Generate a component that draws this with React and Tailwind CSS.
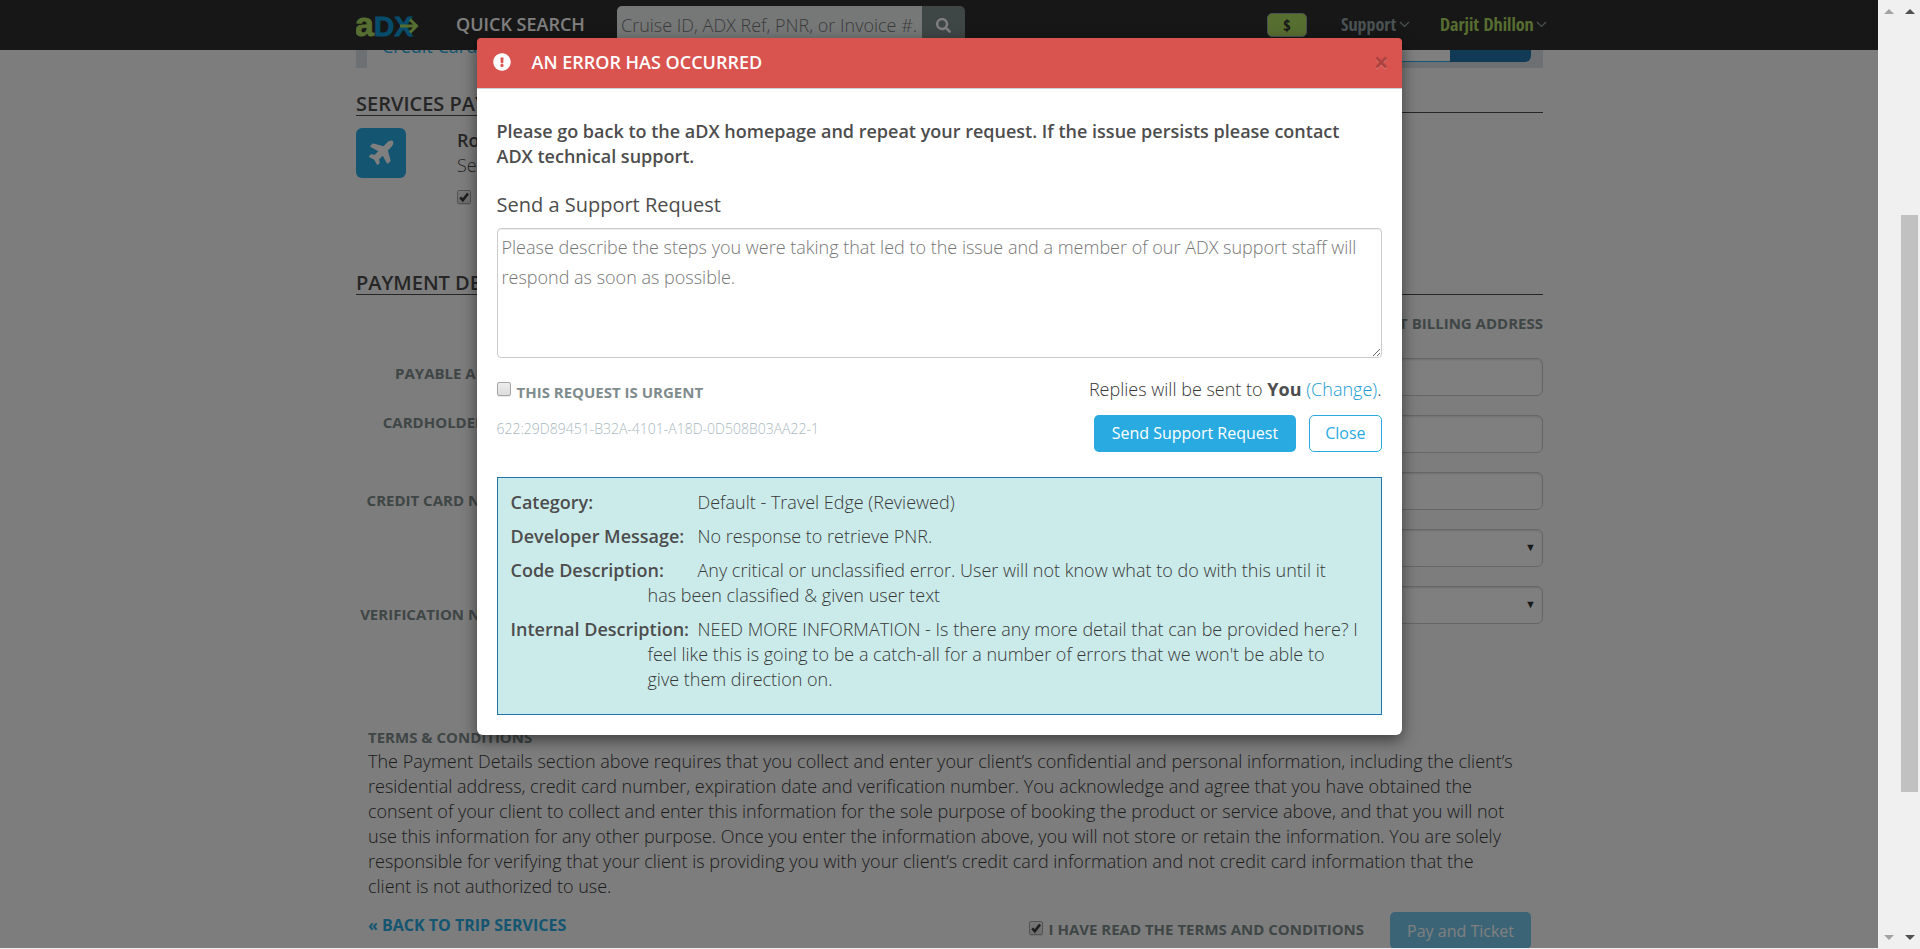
import React from "react";
import { FaExclamationCircle, FaPlane, FaSearch } from "react-icons/fa";

function Logo() {
  return (
    <svg width="64" height="24" viewBox="0 0 64 24" role="img" aria-label="aDX">
      <text x="-1" y="21" fontFamily="'Liberation Sans', sans-serif" fontWeight="700" fontSize="28" strokeWidth="0.8">
        <tspan fontSize="34" fill="#aedc62" stroke="#aedc62">a</tspan>
        <tspan fill="#0f9bd7" stroke="#0f9bd7">DX</tspan>
      </text>
      <path d="M44 11h16M54 4.500l6.500 6.500-6.500 6.500" fill="none" stroke="#aedc62" strokeWidth="3" />
    </svg>
  );
}

function Checkbox({ id, checked, label }) {
  return (
    <span className="relative inline-flex h-3.5 w-3.5 shrink-0">
      <input
        id={id}
        type="checkbox"
        aria-label={label}
        defaultChecked={checked}
        className="peer m-0 h-3.5 w-3.5 appearance-none rounded-[2px] border border-[#a6a6a6] bg-linear-to-b from-[#ededed] to-[#dcdcdc] shadow-[0_1px_1px_rgba(0,0,0,0.1)]"
      />
      <svg viewBox="0 0 13 13" className="pointer-events-none absolute inset-0 hidden peer-checked:block">
        <path d="M3 6.8l2.4 2.7L10.2 3.2" fill="none" stroke="#3c3c3c" strokeWidth="2.4" />
      </svg>
    </span>
  );
}

function Chevron() {
  return (
    <svg width="11" height="7" viewBox="0 0 11 7" aria-hidden="true" className="shrink-0">
      <path d="M1 1l4.5 4.5L10 1" fill="none" stroke="#95a5a6" strokeWidth="1.2" />
    </svg>
  );
}

function TopBar() {
  return (
    <header className="h-[50px] shrink-0 bg-[#2e2e2e] pl-[21px]">
      <div className="mx-auto flex h-full max-w-[1187px] items-start">
        <a href="#home" className="mt-[15px] w-[100px]"><Logo /></a>
        <label htmlFor="quick" className="mt-3 w-[161px] text-[18px] leading-[25px] font-semibold text-white">QUICK SEARCH</label>
        <div className="mt-1.5 flex h-[38px] w-[348px]">
          <input
            id="quick"
            type="text"
            placeholder="Cruise ID, ADX Ref, PNR, or Invoice #."
            className="w-[305px] rounded-l-[5px] bg-[#ecf0f1] pl-1 text-[18px] font-light placeholder:text-[#777]"
          />
          <button aria-label="Search" className="flex flex-1 items-center justify-center rounded-r-[5px] bg-[#7f8c8d] text-white">
            <FaSearch size={15} />
          </button>
        </div>
        <nav className="-mr-1 ml-auto flex items-start font-['Open_Sans_Condensed','Roboto_Condensed',Roboto,sans-serif] text-[18px] font-bold whitespace-nowrap">
          <button className="mt-[13px] h-6 w-10 rounded-[5px] border border-[#95a5a6] bg-[#aedc62] text-[16px] leading-[22px] text-[#2e2e2e]">$</button>
          <a href="#support" className="mt-3 ml-[34px] flex w-[69px] items-center justify-between leading-[25px] text-[#95a5a6]">Support <Chevron /></a>
          <a href="#account" className="mt-3 ml-[30px] flex w-[107px] items-center justify-between leading-[25px] text-[#aedc62]">Darjit Dhillon <Chevron /></a>
        </nav>
      </div>
    </header>
  );
}

const fieldClass =
  "h-[38px] w-full appearance-none rounded-[6px] border border-[#ccc] bg-white px-3 text-[16px] shadow-[inset_0_1px_2px_rgba(0,0,0,0.12)]";

function SelectField({ id }) {
  return (
    <div className="relative">
      <select id={id} aria-label={id} className={fieldClass}><option value=""></option></select>
      <span className="pointer-events-none absolute top-2 right-[7px] text-[11px] leading-5 text-[#333]">▼</span>
    </div>
  );
}

function PaymentPage() {
  return (
    <main className="pl-[21px] text-[#4d4d4d]">
      <div className="mx-auto max-w-[1187px]">
        <div className="flex h-[18px] justify-between overflow-hidden">
          <div className="flex">
            <span className="w-[11px] bg-[#d9e1e4]" />
            <a href="#card" className="-mt-4 pl-[15px] text-[18px] leading-[25px] text-[#29abe2]">Credit Card</a>
          </div>
          <div className="flex h-[18px] w-[300px] items-start bg-[#d9e1e4] pr-3">
            <div className="h-3 flex-1 rounded-bl-[6px] border-b border-[#29abe2] bg-white" />
            <div className="h-3 w-[81px] rounded-br-[6px] bg-[#2174ab]" />
          </div>
        </div>

        <div className="mt-6 flex items-start">
          <h2 className="h-6 flex-1 border-b border-[#4d4d4d] text-[20px] leading-6 font-semibold">SERVICES PAYMENT</h2>
          <div className="h-[21px] w-[400px] border-b border-[#4d4d4d]" />
        </div>

        <div className="mt-3 flex">
          <div className="flex h-[50px] w-[50px] items-center justify-center rounded-[6px] bg-[#29abe2] pb-1 pl-1 text-white">
            <FaPlane size={28} className="-rotate-45" />
          </div>
          <div className="ml-[51px] text-[18px] leading-[25px]">
            <p className="font-semibold">Round</p>
            <p className="font-light">Service</p>
            <div className="mt-3 flex"><Checkbox id="service" checked label="Pay for this service" /></div>
          </div>
        </div>

        <h2 className="mt-[67px] h-6 border-b border-[#4d4d4d] text-[20px] leading-6 font-semibold">PAYMENT DETAILS</h2>
        <p className="mt-[18px] text-right text-[15px] leading-5 font-bold text-[#7f8c8d]">CREDIT BILLING ADDRESS</p>

        <form className="mt-[25px] flex justify-between">
          <div className="flex w-[178px] flex-col pt-[5px] text-right text-[15px] leading-5 font-bold whitespace-nowrap text-[#7f8c8d]">
            <label htmlFor="amount">PAYABLE AMOUNT</label>
            <label htmlFor="holder" className="mt-[29px]">CARDHOLDER NAME</label>
            <label htmlFor="number" className="mt-[58px]">CREDIT CARD NUMBER</label>
            <label htmlFor="cvv" className="mt-[94px]">VERIFICATION NUMBER</label>
          </div>
          <div className="flex w-[400px] flex-col gap-[19px]">
            <input id="amount" className={fieldClass} />
            <input id="holder" className={fieldClass} />
            <input id="number" className={fieldClass} />
            <SelectField id="expiry" />
            <SelectField id="cvv" />
          </div>
        </form>

        <section className="mt-[103px] px-3">
          <h3 className="h-[22px] text-[15px] leading-5 font-bold text-[#7f8c8d]">TERMS &amp; CONDITIONS</h3>
          <p className="text-[18px] leading-[25px] font-light text-[#383838]">
            The Payment Details section above requires that you collect and enter your client’s confidential and personal information, including the client’s residential address, credit card number, expiration date and verification number. You acknowledge and agree that you have obtained the consent of your client to collect and enter this information for the sole purpose of booking the product or service above, and that you will not use this information for any other purpose. Once you enter the information above, you will not store or retain the information. You are solely responsible for verifying that your client is providing you with your client’s credit card information and not credit card information that the client&nbsp;is not authorized to use.
          </p>
          <div className="mt-[13px] flex items-start">
            <a href="#trip" className="mt-0.5 text-[16px] leading-[22px] font-bold text-[#29abe2]">« BACK TO TRIP SERVICES</a>
            <div className="mt-[7px] ml-auto flex items-start text-[#7f8c8d]">
              <span className="flex pt-0.5"><Checkbox id="terms" checked /></span>
              <label htmlFor="terms" className="ml-1.5 text-[15px] leading-5 font-bold">I HAVE READ THE TERMS AND CONDITIONS</label>
            </div>
            <button className="ml-[26px] h-[37px] rounded-[5px] bg-[#76caee] px-[17px] text-[16px] text-white">Pay and Ticket</button>
          </div>
        </section>
      </div>
    </main>
  );
}

const details = [
  ["Category:", "Default - Travel Edge (Reviewed)"],
  ["Developer Message:", "No response to retrieve PNR."],
  ["Code Description:", "Any critical or unclassified error. User will not know what to do with this until it has\u00a0been classified & given user text"],
  ["Internal Description:", "NEED MORE INFORMATION - Is there any more detail that can be provided here? I feel like this is going to be a catch-all for a number of errors that we won't be able to give\u00a0them direction on."],
];

function ErrorDialog() {
  return (
    <div role="dialog" aria-labelledby="error-title" className="w-[925px] max-w-full rounded-[6px] bg-white text-[18px] leading-[25px] text-[#4d4d4d] shadow-[0_5px_15px_rgba(0,0,0,0.5)]">
      <div className="flex h-[51px] items-center rounded-t-[4px] border-b border-[#c8d3da] bg-[#d9534f] pr-[13px] pb-0.5 pl-4 text-white">
        <FaExclamationCircle size={18} />
        <h1 id="error-title" className="ml-[21px] text-[18px] font-semibold">AN ERROR HAS OCCURRED</h1>
        <button aria-label="Close dialog" className="ml-auto text-[26px] leading-5 font-bold text-black opacity-20 text-shadow-[0_1px_0_#fff]">×</button>
      </div>
      <div className="px-5 pt-[30px] pb-5">
        <p className="pr-4 font-semibold">
          Please go back to the aDX homepage and repeat your request. If the issue persists please contact ADX technical support.
        </p>
        <label htmlFor="steps" className="mt-6 block text-[20px] leading-6">Send a Support Request</label>
        <textarea
          id="steps"
          placeholder="Please describe the steps you were taking that led to the issue and a member of our ADX support staff will respond as soon as possible."
          className="mt-[11px] block h-[130px] w-full rounded-[4px] border border-[#ccc] px-1 py-[3px] text-[18px] leading-[30px] font-light shadow-[inset_0_1px_1px_rgba(0,0,0,0.075)] placeholder:text-[#777]"
        />
        <div className="mt-[19px] flex items-start justify-between">
          <div>
            <div className="flex pt-[5px]">
              <Checkbox id="urgent" />
              <label htmlFor="urgent" className="ml-1.5 text-[15px] leading-5 font-bold text-[#7f8c8d]">THIS REQUEST IS URGENT</label>
            </div>
            <p className="mt-[17px] text-[14px] leading-5 font-light text-[#a9b8c0]">622:29D89451-B32A-4101-A18D-0D508B03AA22-1</p>
          </div>
          <div className="text-right">
            <p className="font-light text-[#383838]">Replies will be sent to <b className="font-bold text-[#4d4d4d]">You</b> <a href="#change" className="text-[#1a9bd2]">(Change)</a>.</p>
            <div className="mt-[13px] flex justify-end gap-[13px] text-[16px]">
              <button className="h-[37px] rounded-[5px] bg-[#29abe2] px-[18px] text-white">Send Support Request</button>
              <button className="h-[37px] rounded-[5px] border border-[#29abe2] bg-white px-[15px] text-[#29abe2]">Close</button>
            </div>
          </div>
        </div>
        <div className="mt-[25px] flex flex-col gap-[9px] border border-[#2174ab] bg-[#cbebea] px-[13px] pt-3 pb-[22px] font-light text-[#383838]">
          {details.map(([term, text]) => (
            <p key={term} className="pl-[137px] -indent-[137px]">
              <b className="inline-block w-[187px] indent-0 font-semibold text-[#4d4d4d]">{term}</b>{text}
            </p>
          ))}
        </div>
      </div>
    </div>
  );
}

function Arrow({ className, down }) {
  return (
    <svg width="10" height="5" viewBox="0 0 10 5" aria-hidden="true" className={className}>
      <path d={down ? "M0 0h10L5 5z" : "M0 5h10L5 0z"} fill="currentColor" />
    </svg>
  );
}

function ScrollTrack({ color, thumb }) {
  return (
    <div className={"flex w-[21px] flex-col items-center bg-[#f0f0f0] pt-[9px] pb-[9px] " + color}>
      <Arrow />
      {thumb && <div className="mt-[201px] h-[577px] w-[17px] bg-[#c1c1c1]" />}
      <Arrow down className="mt-auto" />
    </div>
  );
}

export default function App() {
  return (
    <div className="flex h-screen overflow-hidden bg-[#f0f0f0] font-['Open_Sans',sans-serif]">
      <div className="relative mb-px flex-1 overflow-hidden bg-[#fafafa]">
        <TopBar />
        <PaymentPage />
        <div className="absolute inset-0 flex items-start justify-center bg-black/50 pt-[38px]">
          <ErrorDialog />
        </div>
      </div>
      <ScrollTrack color="text-[#a3a3a3]" />
      <ScrollTrack color="text-[#505050]" thumb />
    </div>
  );
}
